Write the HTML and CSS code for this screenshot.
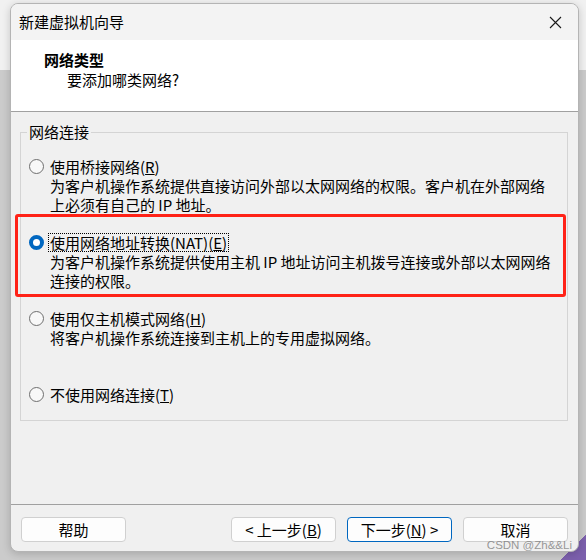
FILE: index.html
```html
<!DOCTYPE html>
<html lang="zh-CN">
<head>
    <meta charset="UTF-8">
    <meta name="viewport" content="width=device-width, initial-scale=1.0">
    <title>新建虚拟机向导</title>
    <link rel="stylesheet" href="styles.css">
</head>
<body>
    <div class="window">
        <div class="titlebar">
            <span class="title">新建虚拟机向导</span>
            <svg class="close" width="13" height="13" viewBox="0 0 13 13">
                <path d="M1 1 L12 12 M12 1 L1 12" stroke="#1a1a1a" stroke-width="1.1" fill="none"/>
            </svg>
        </div>
        <div class="header">
            <div class="header-title">网络类型</div>
            <div class="header-sub">要添加哪类网络?</div>
        </div>
        <div class="main">
            <fieldset class="group">
                <legend>网络连接</legend>

                <div class="option">
                    <div class="option-row">
                        <span class="radio"></span>
                        <span class="label">使用桥接网络(<u>R</u>)</span>
                    </div>
                    <div class="desc">为客户机操作系统提供直接访问外部以太网网络的权限。客户机在外部网络<br>上必须有自己的 IP 地址。</div>
                </div>

                <div class="option marked">
                    <div class="mark"></div>
                    <div class="option-row">
                        <span class="radio checked"></span>
                        <span class="label focused">使用网络地址转换(NAT)(<u>E</u>)</span>
                    </div>
                    <div class="desc">为客户机操作系统提供使用主机 IP 地址访问主机拨号连接或外部以太网网络<br>连接的权限。</div>
                </div>

                <div class="option">
                    <div class="option-row">
                        <span class="radio"></span>
                        <span class="label">使用仅主机模式网络(<u>H</u>)</span>
                    </div>
                    <div class="desc">将客户机操作系统连接到主机上的专用虚拟网络。</div>
                </div>

                <div class="option last">
                    <div class="option-row">
                        <span class="radio"></span>
                        <span class="label">不使用网络连接(<u>T</u>)</span>
                    </div>
                </div>
            </fieldset>
        </div>
        <div class="footer">
            <button class="btn help">帮助</button>
            <button class="btn">&lt; 上一步(<u>B</u>)</button>
            <button class="btn primary">下一步(<u>N</u>) &gt;</button>
            <button class="btn">取消</button>
        </div>
    </div>
    <div class="watermark">CSDN @Zh&amp;&amp;Li</div>
</body>
</html>
```

FILE: styles.css
```css
body {
    margin: 0;
    height: 560px;
    overflow: hidden;
    position: relative;
    font-family: "Noto Sans CJK SC", "Noto Sans", sans-serif;
    font-size: 15px;
    color: #000;
    background:
        linear-gradient(to bottom right, transparent 50%, #7c60ad 50%) right bottom / 26px 26px no-repeat,
        linear-gradient(to bottom, #f1f1f1 0, #f1f1f1 70px, #cbcbcb 70px);
}
.window {
    margin: 3px 0 0 10px;
    width: 567px;
    height: 547px;
    border: 1px solid #b4b4b4;
    border-radius: 8px;
    background: #f0f0f0;
    overflow: hidden;
    display: flex;
    flex-direction: column;
    box-shadow: 0 2px 8px rgba(0, 0, 0, 0.18);
}
.titlebar {
    height: 36px;
    flex: none;
    display: flex;
    align-items: center;
    justify-content: space-between;
    padding: 0 16px 0 8px;
    background: #f3f3f3;
}
.title {
    line-height: 20px;
}
.header {
    height: 61px;
    flex: none;
    padding: 10px 0 0 33px;
    background: #fff;
    border-bottom: 1px solid #a0a0a0;
    line-height: 20px;
}
.header-title {
    font-weight: bold;
}
.header-sub {
    margin-left: 23px;
}
.main {
    flex: 1;
    padding: 10px 10px 0 9px;
}
.group {
    margin: 0;
    padding: 15px 8px 16px 8px;
    border: 1px solid #d4d4d4;
    min-width: 0;
}
.group legend {
    padding: 0 2px;
    margin-left: -2px;
    line-height: 20px;
}
.option {
    line-height: 19px;
    height: 76px;
}
.option.last {
    height: 19px;
}
.marked {
    position: relative;
}
.mark {
    position: absolute;
    top: -19px;
    bottom: 12px;
    left: -14px;
    right: -7px;
    border: 3px solid #ff2217;
    border-radius: 3px;
}
.option-row {
    display: flex;
    align-items: center;
    gap: 6px;
    height: 19px;
}
.radio {
    box-sizing: border-box;
    width: 15px;
    height: 15px;
    border: 1px solid #6e6e6e;
    border-radius: 50%;
    background: #f8f8f8;
    flex: none;
}
.radio.checked {
    border: 4px solid #0067c0;
    background: #fff;
}
.label {
    white-space: nowrap;
}
.label.focused {
    border: 1px dotted #000;
    padding: 0 1px;
    margin-left: -2px;
    line-height: 17px;
}
.desc {
    padding-left: 21px;
    white-space: nowrap;
}
.footer {
    flex: none;
    display: flex;
    gap: 11px;
    padding: 12px 10px 9px 10px;
    border-top: 1px solid #a0a0a0;
}
.btn {
    width: 105px;
    height: 25px;
    padding: 0;
    border: 1px solid #d0d0d0;
    border-radius: 4px;
    background: #fdfdfd;
    font-family: inherit;
    font-size: 15px;
    line-height: 23px;
    color: #000;
}
.btn.help {
    margin-right: auto;
}
.btn.primary {
    border-color: #0067c0;
}
.watermark {
    position: absolute;
    right: 14px;
    top: 539px;
    font-family: "Liberation Sans", sans-serif;
    font-size: 11.5px;
    color: rgba(110, 110, 110, 0.7);
}
```
